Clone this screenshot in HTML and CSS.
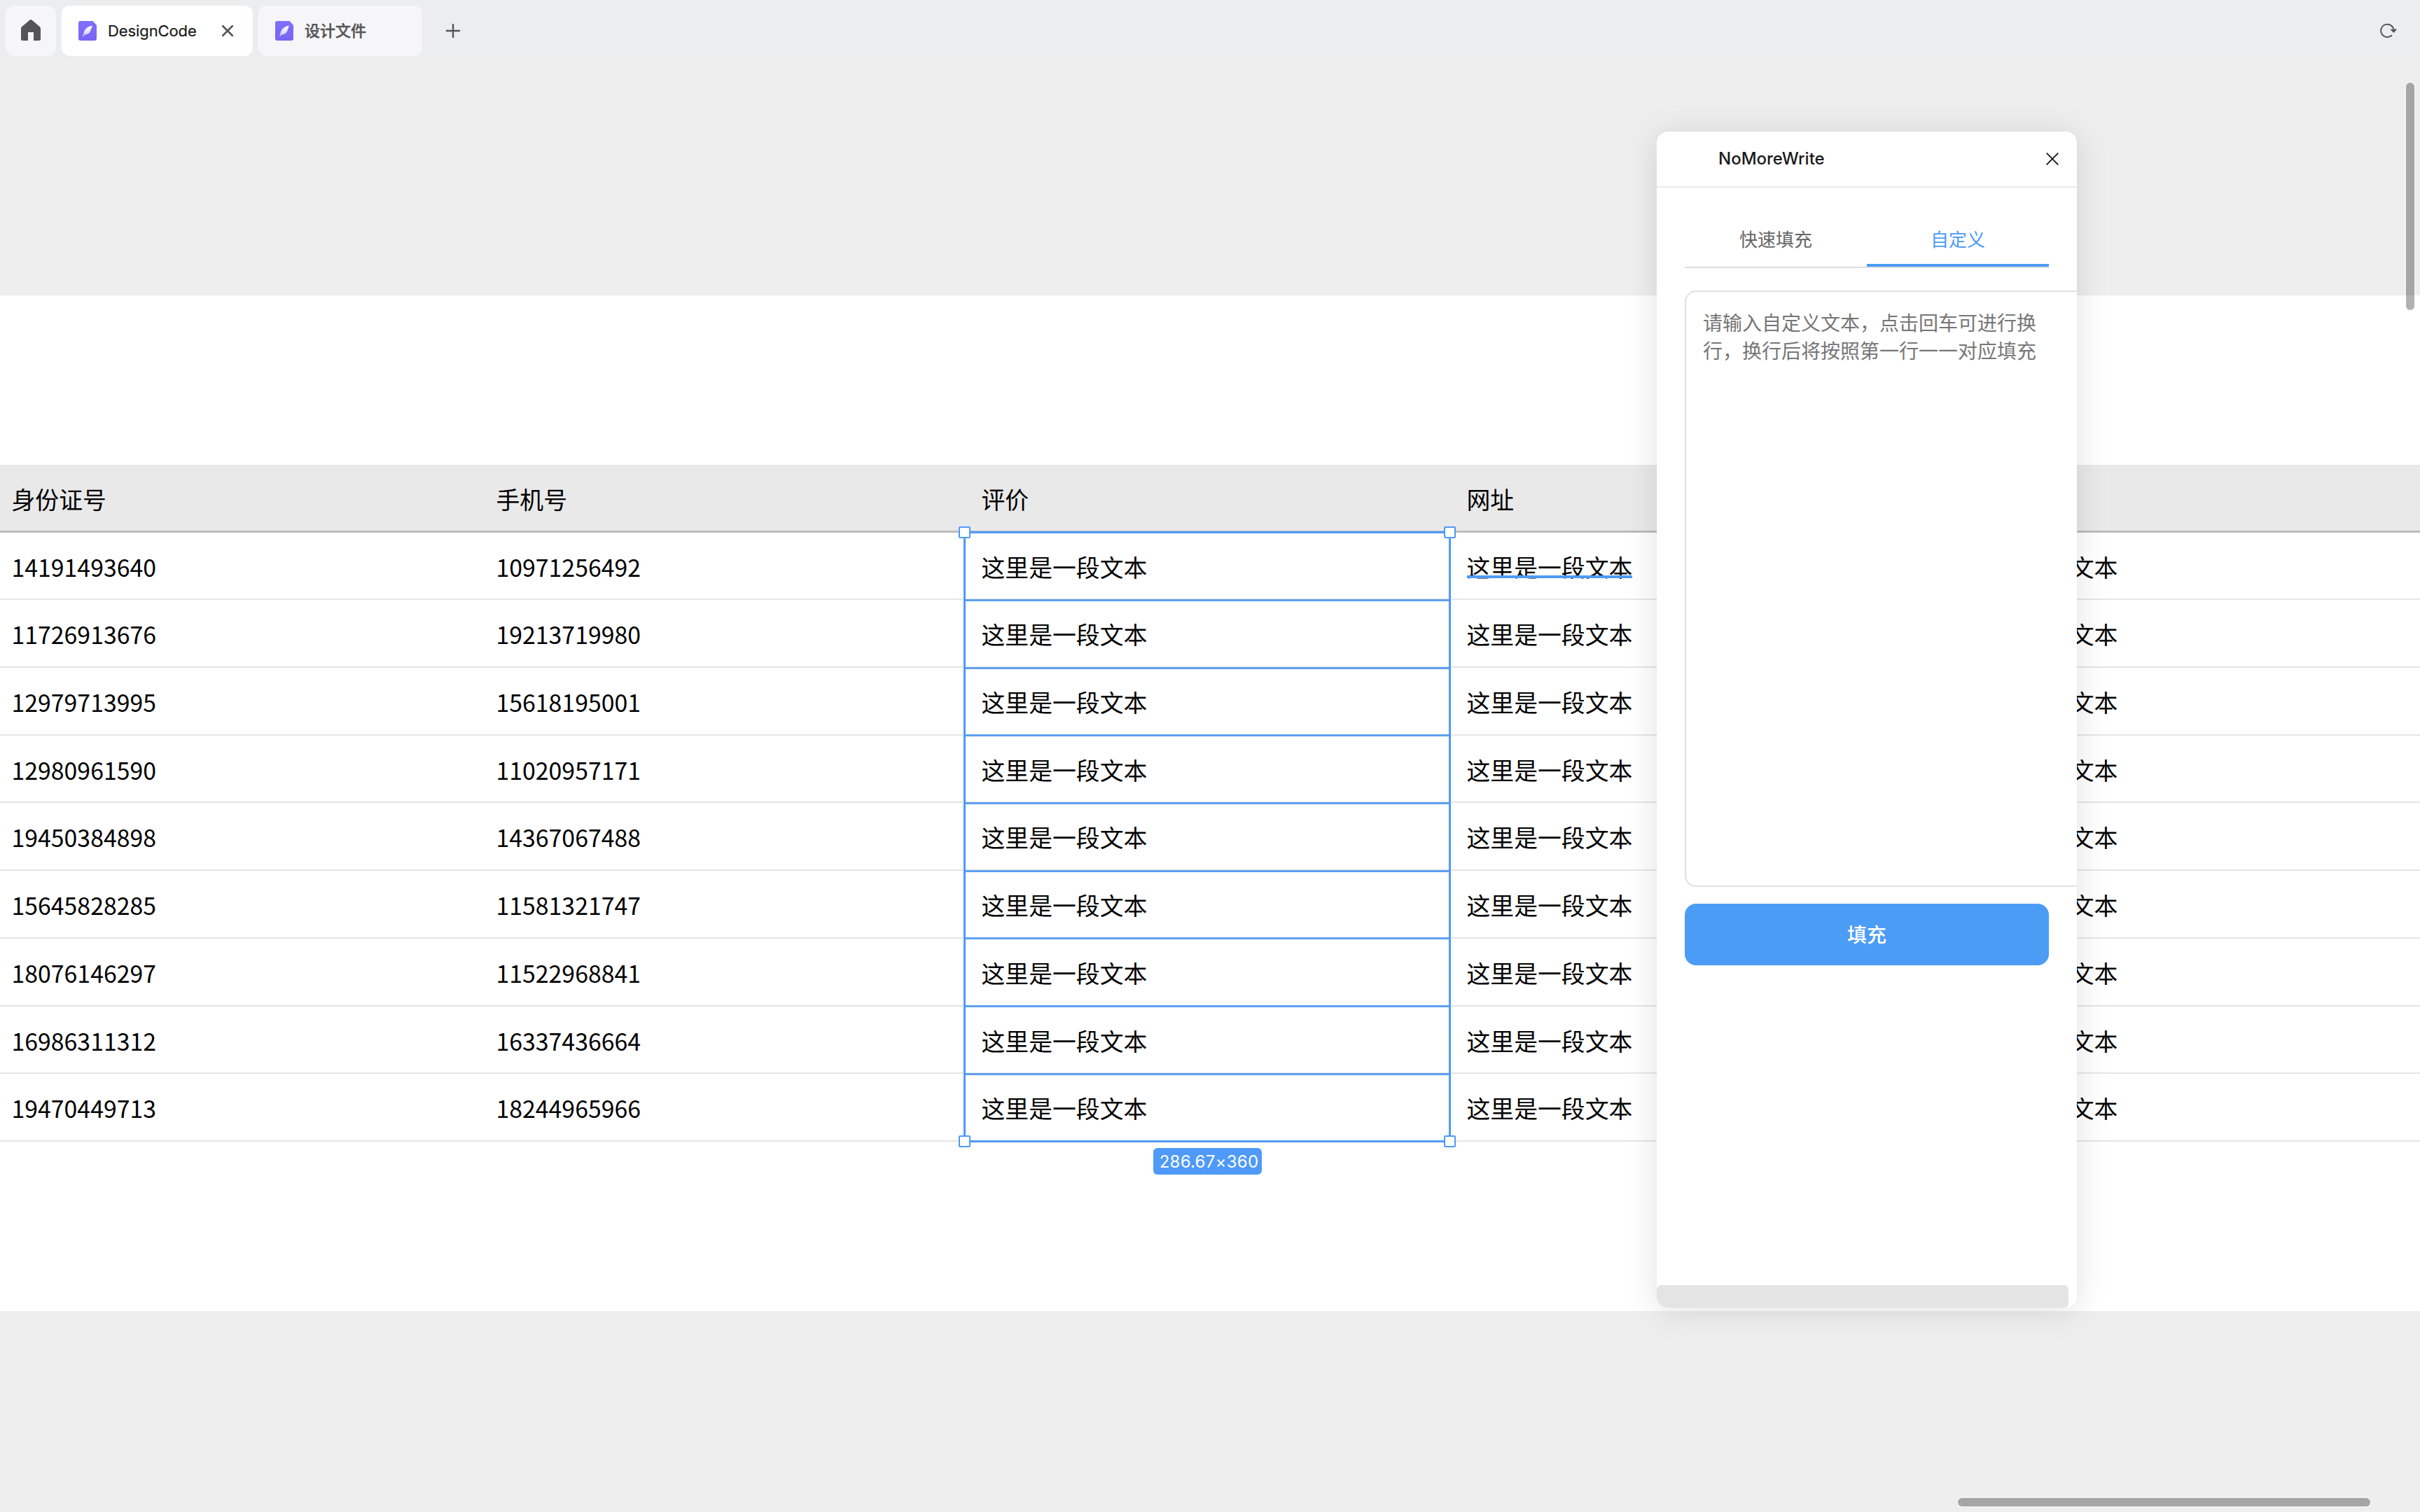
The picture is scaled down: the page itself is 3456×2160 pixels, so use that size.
FILE: index.html
```html
<!DOCTYPE html>
<html lang="zh-CN">
<head>
<meta charset="utf-8">
<title>DesignCode</title>
<link rel="stylesheet" href="styles.css">
</head>
<body>
<header class="topbar">
  <div class="home"><svg width="28" height="30" viewBox="0 0 28 30"><path d="M12.6.6Q14-.5 15.400.6L26.600 10Q28 11.200 28 13V27.500Q28 30 25.500 30H18V18H10V30H2.500Q0 30 0 27.500V13Q0 11.200 1.400 10Z" fill="#555557"/></svg></div>
  <div class="tab active">
    <svg class="file" width="26" height="28" viewBox="0 0 26 28"><defs><linearGradient id="g" x1="0" y1="0" x2="0" y2="1"><stop offset="0" stop-color="#8070fb"/><stop offset="1" stop-color="#7864f2"/></linearGradient><linearGradient id="f" x1="0" y1="0" x2="0" y2="1"><stop offset="0" stop-color="#fff"/><stop offset="1" stop-color="#cfc8fb"/></linearGradient></defs><path d="M3 0H20.500L26 6V25a3 3 0 0 1-3 3H3a3 3 0 0 1-3-3V3a3 3 0 0 1 3-3Z" fill="url(#g)"/><path d="M19.500 6.500C12 8 7.500 13 7.500 18.500L6 22L7.300 22L9 19.500C15 19.500 17 15.500 18 12.500L17.500 12L19 10Z" fill="url(#f)"/></svg>
    <span class="label">DesignCode</span>
    <svg class="x" width="16" height="16" viewBox="0 0 16 16"><path d="M1 1L15 15M15 1L1 15" stroke="#555557" stroke-width="2.600" stroke-linecap="round"/></svg>
  </div>
  <div class="tab second">
    <svg class="file" width="26" height="28" viewBox="0 0 26 28"><path d="M3 0H20.500L26 6V25a3 3 0 0 1-3 3H3a3 3 0 0 1-3-3V3a3 3 0 0 1 3-3Z" fill="url(#g)"/><path d="M19.500 6.500C12 8 7.500 13 7.500 18.500L6 22L7.300 22L9 19.500C15 19.500 17 15.500 18 12.500L17.500 12L19 10Z" fill="url(#f)"/></svg>
    <span class="label cn">设计文件</span>
  </div>
  <svg class="plus" width="20" height="20" viewBox="0 0 20 20"><path d="M10 0V20M0 10H20" stroke="#555557" stroke-width="2.400"/></svg>
  <svg class="refresh" width="26" height="24" viewBox="0 0 26 24"><path d="M17 18.300A9.200 9.200 0 1 1 19.600 12.500" fill="none" stroke="#555557" stroke-width="2"/><path d="M15.200 10L19.500 14L23.200 9.500" fill="#555557" stroke="#555557" stroke-width="1.400" stroke-linejoin="round"/></svg>
</header>
<main class="canvas">
  <section class="artboard">
    <div class="table" id="table">
      <div class="row head"><div>身份证号</div><div>手机号</div><div>评价</div><div>网址</div><div></div></div>
      <div class="row"><div>14191493640</div><div>10971256492</div><div>这里是一段文本</div><div><span class="hovered">这里是一段文本</span></div><div>这里是一段文本</div></div>
      <div class="row"><div>11726913676</div><div>19213719980</div><div>这里是一段文本</div><div>这里是一段文本</div><div>这里是一段文本</div></div>
      <div class="row"><div>12979713995</div><div>15618195001</div><div>这里是一段文本</div><div>这里是一段文本</div><div>这里是一段文本</div></div>
      <div class="row"><div>12980961590</div><div>11020957171</div><div>这里是一段文本</div><div>这里是一段文本</div><div>这里是一段文本</div></div>
      <div class="row"><div>19450384898</div><div>14367067488</div><div>这里是一段文本</div><div>这里是一段文本</div><div>这里是一段文本</div></div>
      <div class="row"><div>15645828285</div><div>11581321747</div><div>这里是一段文本</div><div>这里是一段文本</div><div>这里是一段文本</div></div>
      <div class="row"><div>18076146297</div><div>11522968841</div><div>这里是一段文本</div><div>这里是一段文本</div><div>这里是一段文本</div></div>
      <div class="row"><div>16986311312</div><div>16337436664</div><div>这里是一段文本</div><div>这里是一段文本</div><div>这里是一段文本</div></div>
      <div class="row"><div>19470449713</div><div>18244965966</div><div>这里是一段文本</div><div>这里是一段文本</div><div>这里是一段文本</div></div>
      <div class="selection">
        <i></i><i></i><i></i><i></i><i></i><i></i><i></i><i></i><i></i>
        <b class="handle tl"></b><b class="handle tr"></b><b class="handle bl"></b><b class="handle br"></b>
        <span class="size">286.67×360</span>
      </div>
    </div>
  </section>
</main>
<aside class="panel">
  <div class="panel-head"><span>NoMoreWrite</span><svg width="18" height="18" viewBox="0 0 18 18"><path d="M.7.7L17.300 17.300M17.300.7L.7 17.300" stroke="#1a1a1a" stroke-width="1.900"/></svg></div>
  <div class="panel-body">
    <nav class="modes"><div>快速填充</div><div class="on">自定义</div></nav>
    <div class="custom-text">请输入自定义文本，点击回车可进行换行，换行后将按照第一行一一对应填充</div>
    <div class="fill">填充</div>
  </div>
  <div class="panel-scroll"></div>
</aside>
<div class="bar vertical"></div>
<div class="bar horizontal"></div>
</body>
</html>
```
FILE: styles.css
```css
* { box-sizing: border-box; }
body { margin: 0; width: 3456px; height: 2160px; overflow: hidden; position: relative; background: #eee; font-family: Inter, "Noto Sans CJK SC", sans-serif; display: flex; flex-direction: column; }
svg { display: block; flex: none; }
.topbar { height: 88px; flex: none; padding: 8px 31px 8px 8px; background: #ebedef; display: flex; gap: 8px; align-items: flex-start; }
.home { width: 72px; height: 72px; border-radius: 12px; background: #f6f6f9; display: flex; justify-content: center; padding-top: 20px; }
.tab { height: 72px; border-radius: 12px; background: #f6f6f9; display: flex; align-items: center; padding: 0 28px 0 24px; color: #555557; }
.tab.active { width: 273px; background: #fff; color: #1a1a1a; }
.tab.second { width: 234px; }
.label { margin-left: 16px; font-size: 22px; letter-spacing: -.1px; line-height: 30px; white-space: nowrap; -webkit-text-stroke: .2px currentColor; }
.label.cn { font-weight: 500; letter-spacing: 0; -webkit-text-stroke: .4px currentColor; }
.x { margin-left: auto; }
.plus { margin: 26px 0 0 26px; }
.refresh { margin: 24px 0 0 auto; }
.canvas { flex: 1; padding-top: 334px; }
.artboard { height: 1450.500px; background: #fff; padding-top: 242px; }
.table { width: 3465px; margin-left: -8.500px; position: relative; font: 33.840px/48px "Noto Sans CJK SC", sans-serif; color: #000; }
.row { display: grid; grid-template-columns: repeat(5, 693px); height: 96.700px; padding-top: 3.400px; align-items: center; border-bottom: 2.500px solid #e5e5e5; }
.row > div { padding-left: 24px; white-space: nowrap; }
.row > div:first-child { padding-left: 25px; }
.row.head { background: #e9e9e9; border-bottom: 3px solid #bdbdbd; }
.hovered { position: relative; display: inline-block; vertical-align: top; }
.hovered::after { content: ""; position: absolute; left: 0; right: 0; top: 36.500px; height: 4px; background: #4f9af8; }
.selection { position: absolute; left: 1384.500px; top: 95.200px; width: 696px; height: 873.300px; border: 3px solid #4f9af8; display: grid; grid-template-rows: repeat(9, 96.700px); }
.selection i { border-bottom: 3px solid #5d9ff0; }
.selection i:nth-of-type(9) { border: 0; }
.handle { position: absolute; width: 17px; height: 17px; background: #fff; border: 2px solid #4f9af8; border-radius: 2px; }
.tl { left: -10px; top: -10px; }
.tr { right: -10px; top: -10px; }
.bl { left: -10px; bottom: -10px; }
.br { right: -10px; bottom: -10px; }
.size { position: absolute; left: 268px; top: 878px; width: 155px; height: 38px; padding-left: 4px; border-radius: 6px; background: #4f9af8; color: #fff; font: 24px/40px Inter, sans-serif; letter-spacing: .25px; text-align: center; white-space: nowrap; }
.panel { position: absolute; left: 2366px; top: 188px; width: 600px; height: 1680px; border-radius: 16px; background: #fff; box-shadow: 0 4px 48px rgba(0,0,0,.12); }
.panel-head { height: 80px; border-bottom: 2px solid #ebebeb; display: flex; justify-content: space-between; align-items: center; padding: 0 26px 0 88px; font-size: 24px; font-weight: 500; color: #1a1a1a; }
.panel-head span { margin-top: -2px; }
.panel-body { height: 1568px; padding: 28px 0 0 40px; overflow: hidden; }
.modes { width: 520px; height: 87px; border-bottom: 2px solid #dedede; display: grid; grid-template-columns: 1fr 1fr; grid-template-rows: 85px; font-size: 26px; line-height: 93px; text-align: center; color: #666; }
.modes .on { color: #4b9cf5; border-bottom: 4px solid #4b9cf5; }
.custom-text { width: 572px; height: 852px; margin-top: 32px; border: 2px solid #e0e0e0; border-radius: 16px; padding: 25px 24px 24px; font-size: 28px; line-height: 40px; color: #767676; }
.fill { width: 520px; height: 88px; margin-top: 24px; border-radius: 16px; background: #4b9cf5; color: #fff; font-size: 28px; font-weight: 500; line-height: 90px; text-align: center; }
.panel-scroll { width: 588px; height: 32px; background: #e4e4e4; border-radius: 6px 6px 6px 16px; }
.bar { position: absolute; border-radius: 8px; background: rgba(0,0,0,.3); box-shadow: 0 0 0 2px rgba(255,255,255,.3); }
.vertical { left: 3436px; top: 118px; width: 12px; height: 325px; }
.horizontal { left: 2796px; top: 2140px; width: 589px; height: 12px; }
```
